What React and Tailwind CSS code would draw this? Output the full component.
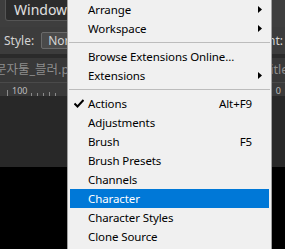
import React from "react";

const items = [
  { label: "Arrange", sub: true },
  { label: "Workspace", sub: true },
  { sep: true },
  { label: "Browse Extensions Online..." },
  { label: "Extensions", sub: true },
  { sep: true },
  { label: "Actions", checked: true, shortcut: "Alt+F9" },
  { label: "Adjustments" },
  { label: "Brush", shortcut: "F5" },
  { label: "Brush Presets" },
  { label: "Channels" },
  { label: "Character", active: true },
  { label: "Character Styles" },
  { label: "Clone Source" },
];

const Check = () => (
  <svg width="10" height="9" viewBox="0 0 10 9">
    <path d="M0.5 4.5 L3.5 7.5 L9.5 1" stroke="#000" strokeWidth="2" fill="none" />
  </svg>
);

const Arrow = ({ active }) => (
  <svg width="4" height="7" viewBox="0 0 4 7">
    <path d="M0 0 L4 3.5 L0 7 Z" fill={active ? "#fff" : "#000"} />
  </svg>
);

const MenuRow = ({ item }) => {
  if (item.sep) {
    return (
      <div className="h-[9px] flex items-center -mx-[1px]">
        <div className="h-px w-full bg-[#bcbcbc]" />
      </div>
    );
  }
  return (
    <div
      className={`h-[19px] flex items-center ${
        item.active ? "bg-[#0078d7] text-white" : "text-black"
      }`}
    >
      <div className="w-[18px] flex justify-center">{item.checked && <Check />}</div>
      <span className="flex-1 whitespace-nowrap">{item.label}</span>
      {item.shortcut && <span className="mr-[17px]">{item.shortcut}</span>}
      {item.sub && (
        <div className="mr-[7px] flex">
          <Arrow active={item.active} />
        </div>
      )}
    </div>
  );
};

export default function App() {
  return (
    <div
      className="relative w-[285px] h-[249px] overflow-hidden bg-black"
      style={{ fontFamily: "'Noto Sans', 'Noto Sans CJK KR', sans-serif" }}
    >
      {/* Photoshop workspace behind the menu */}
      <div className="flex flex-col w-full">
        <div className="h-[27px] bg-[#3e3e3e] flex items-start pl-[5px]">
          <div className="h-[21px] w-[70px] bg-[#2c2c2c] border border-[#555] border-t-0 rounded-b-[3px] text-[14px] leading-[20px] text-[#e0e0e0] pl-[8px]">
            Window
          </div>
        </div>
        <div className="h-[27px] bg-[#3c3c3c] flex items-center pl-[4px] gap-[7px] text-[12px] text-[#d4d4d4]">
          <span>Style:</span>
          <div className="h-[17px] w-[60px] bg-[#4a4a4a] border border-[#6a6a6a] rounded-[2px] leading-[15px] pl-[6px]">
            Normal
          </div>
          <span className="ml-auto mr-[2px]">Count:</span>
        </div>
        <div className="h-[4px] bg-[#2a2a2a]" />
        <div className="h-[24px] bg-[#383838] flex items-center text-[12.5px] text-[#8e8e8e] whitespace-nowrap">
          <span className="ml-[-5px]">문자툴_블러.psd</span>
          <span className="ml-auto mr-[-11px]">Untitled</span>
        </div>
        <div className="h-[14px] bg-[#3a3a3a] border-t border-[#4a4a4a] relative flex items-end text-[9px] leading-[11px] text-[#bdbdbd]">
          <div className="h-[6px] w-px bg-[#8a8a8a] ml-[7px]" />
          <span className="ml-[4px]">100</span>
          <div className="flex items-end gap-[5px] ml-[4px]">
            <div className="h-[3px] w-px bg-[#8a8a8a]" />
            <div className="h-[3px] w-px bg-[#8a8a8a]" />
            <div className="h-[3px] w-px bg-[#8a8a8a]" />
            <div className="h-[4px] w-px bg-[#8a8a8a]" />
            <div className="h-[3px] w-px bg-[#8a8a8a]" />
          </div>
          <span className="ml-auto mr-[4px]">0</span>
        </div>
        <div className="h-[71px] bg-[#282828]" />
      </div>

      {/* Window menu */}
      <div className="absolute left-[67px] top-0 w-[205px] h-[260px] bg-[#f0f0f0] border-x border-[#a0a0a0] px-[2px] text-[11.5px] tracking-[-0.1px]">
        {items.map((item, i) => (
          <MenuRow key={i} item={item} />
        ))}
      </div>
    </div>
  );
}
